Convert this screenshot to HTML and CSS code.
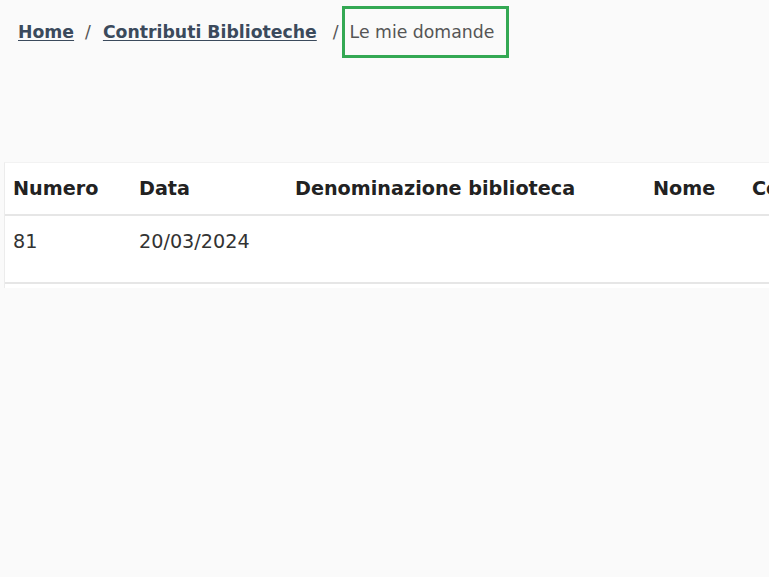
FILE: index.html
```html
<!DOCTYPE html>
<html lang="it">
<head>
<meta charset="utf-8">
<title>Le mie domande</title>
<link rel="stylesheet" href="styles.css">
</head>
<body>
<nav class="breadcrumb">
  <a class="crumb-link" href="#">Home</a>
  <span class="sep">/</span>
  <a class="crumb-link" href="#">Contributi Biblioteche</a>
  <span class="sep sep-last">/</span>
  <span class="current">Le mie domande</span>
</nav>
<section class="card">
  <table class="grid">
    <colgroup>
      <col class="c-num"><col class="c-data"><col class="c-den"><col class="c-nome"><col class="c-cog">
    </colgroup>
    <thead>
      <tr>
        <th>Numero</th><th>Data</th><th>Denominazione biblioteca</th><th>Nome</th><th>Cognome</th>
      </tr>
    </thead>
    <tbody>
      <tr>
        <td>81</td><td>20/03/2024</td><td></td><td></td><td></td>
      </tr>
    </tbody>
  </table>
</section>
</body>
</html>
```
FILE: styles.css
```css
html, body {
  margin: 0;
  padding: 0;
  background: #fafafa;
  font-family: "DejaVu Sans", Verdana, sans-serif;
  overflow: hidden;
}
body {
  width: 769px;
  height: 577px;
}
.breadcrumb {
  display: flex;
  align-items: center;
  padding: 6px 0 0 18px;
  height: 52px;
  font-size: 17.3px;
}
.crumb-link {
  color: #3b4a5c;
  font-weight: bold;
  text-decoration: underline;
  text-underline-offset: 2px;
}
.sep {
  color: #555;
  margin: 0 12px 0 11px;
}
.sep-last {
  margin: 0 3px 0 16px;
}
.current {
  box-sizing: border-box;
  height: 52px;
  display: flex;
  align-items: center;
  padding: 0 12px 0 5px;
  border: 3px solid #33a853;
  color: #555;
}
.card {
  margin: 104px 0 0 4px;
  background: #fff;
  border-left: 1px solid #ececec;
  border-top: 1px solid #f2f2f2;
  padding-bottom: 4px;
  overflow: hidden;
}
.grid {
  table-layout: fixed;
  border-collapse: collapse;
  width: 940px;
  font-size: 19.2px;
}
.c-num { width: 126px; }
.c-data { width: 156px; }
.c-den { width: 358px; }
.c-nome { width: 99px; }
.c-cog { width: 201px; }
.grid th {
  text-align: left;
  font-weight: bold;
  color: #222;
  height: 51px;
  padding: 0 0 0 8px;
  border-bottom: 2px solid #e6e6e6;
  white-space: nowrap;
}
.grid td {
  color: #333;
  height: 68px;
  vertical-align: top;
  padding: 14px 0 0 8px;
  box-sizing: border-box;
  border-bottom: 2px solid #e6e6e6;
}
```
